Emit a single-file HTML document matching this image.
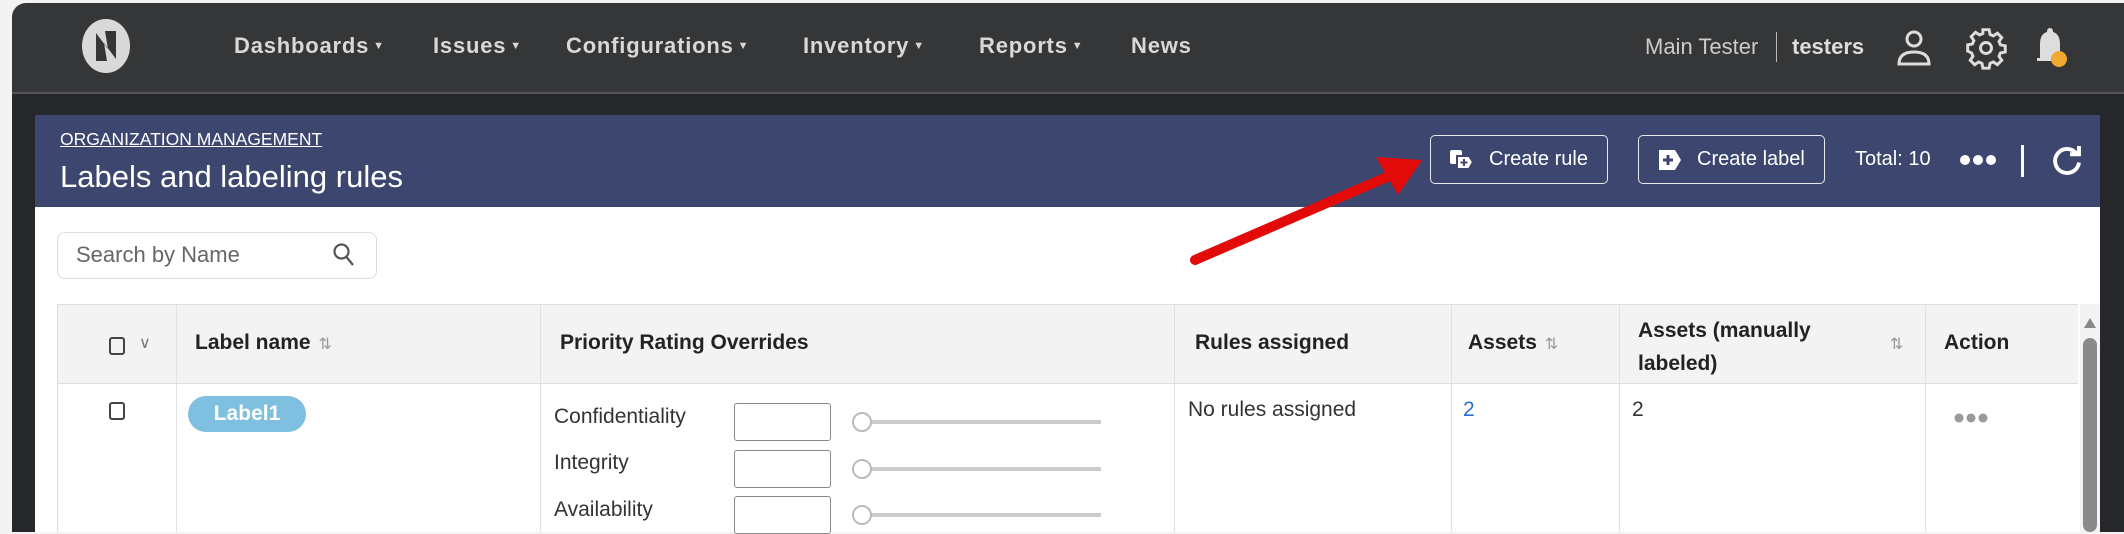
<!DOCTYPE html>
<html><head><meta charset="utf-8"><style>
*{margin:0;padding:0;box-sizing:border-box}
body{width:2124px;height:532px;overflow:hidden;background:#f3f3f3;font-family:"Liberation Sans",sans-serif;position:relative}
.a{position:absolute;white-space:nowrap}
.nav{color:#d8d8d8;font-weight:bold;font-size:22px;top:33px;letter-spacing:0.8px}
.nav small{font-size:11px;margin-left:4px;vertical-align:4px}
.th{font-weight:bold;font-size:21px;color:#222}
.td{font-size:21px;color:#333}
.vl{position:absolute;width:1px;background:#e0e0e0}
.btn{position:absolute;border:1px solid #e8e8ee;border-radius:5px;color:#fff;font-size:20px;display:flex;align-items:center}
.inp{position:absolute;left:734px;width:97px;height:38px;border:1px solid #888;border-radius:3px;background:#fff}
.sl{position:absolute;left:852px;width:249px;height:4px;background:#ccc}
.knob{position:absolute;left:852px;width:20px;height:20px;border:2px solid #bbb;border-radius:50%;background:#fff}
.sort{color:#999;font-size:16px;font-weight:normal;margin-left:8px}
</style></head><body>
<div class="a" style="left:12px;top:3px;width:2112px;height:90px;background:#353637;border-top-left-radius:14px"></div>
<div class="a" style="left:12px;top:92px;width:2112px;height:2px;background:#555"></div>
<div class="a" style="left:12px;top:94px;width:2112px;height:438px;background:#26272b"></div>
<svg class="a" style="left:79px;top:19px" width="54" height="54" viewBox="0 0 54 54"><ellipse cx="27" cy="27" rx="24" ry="27" fill="#d9d9d9"/><path d="M17 42 V14 L29 30 L26 12 H37 V40 L25 24 L28 42 Z" fill="#353637"/></svg>
<div class="a nav" style="left:234px">Dashboards<small>▼</small></div>
<div class="a nav" style="left:433px">Issues<small>▼</small></div>
<div class="a nav" style="left:566px">Configurations<small>▼</small></div>
<div class="a nav" style="left:803px">Inventory<small>▼</small></div>
<div class="a nav" style="left:979px">Reports<small>▼</small></div>
<div class="a nav" style="left:1131px">News</div>
<div class="a" style="left:1645px;top:34px;font-size:22px;color:#ccc">Main Tester</div>
<div class="a" style="left:1776px;top:32px;width:1px;height:30px;background:#bbb"></div>
<div class="a" style="left:1792px;top:34px;font-size:22px;color:#ddd;font-weight:bold">testers</div>
<svg class="a" style="left:1894px;top:28px" width="40" height="40" viewBox="0 0 40 40" fill="none" stroke="#ddd" stroke-width="3"><circle cx="20" cy="11" r="7"/><path d="M5 36 Q5 24 20 24 Q35 24 35 36 Z"/></svg>
<svg class="a" style="left:1964px;top:26px" width="44" height="44" viewBox="0 0 24 24" fill="none" stroke="#ddd" stroke-width="1.6"><circle cx="12" cy="12" r="3"/><path d="M10.3 2h3.4l.5 2.6 1.8.8 2.2-1.5 2.4 2.4-1.5 2.2.8 1.8 2.6.5v3.4l-2.6.5-.8 1.8 1.5 2.2-2.4 2.4-2.2-1.5-1.8.8-.5 2.6h-3.4l-.5-2.6-1.8-.8-2.2 1.5-2.4-2.4 1.5-2.2-.8-1.8L2 13.7v-3.4l2.6-.5.8-1.8-1.5-2.2 2.4-2.4 2.2 1.5 1.8-.8z"/></svg>
<svg class="a" style="left:2032px;top:26px" width="40" height="44" viewBox="0 0 40 44"><path d="M8 32 V18 Q8 8 15 6 Q15 2 18 2 Q21 2 21 6 Q28 8 28 18 V32 H31 V35 H5 V32 Z" fill="#ddd"/><circle cx="27" cy="33" r="8" fill="#f0a830"/></svg>
<div class="a" style="left:35px;top:115px;width:2065px;height:92px;background:#3c466e"></div>
<div class="a" style="left:60px;top:129px;font-size:17.5px;color:#fff;text-decoration:underline">ORGANIZATION MANAGEMENT</div>
<div class="a" style="left:60px;top:159px;font-size:31px;color:#fff">Labels and labeling rules</div>
<div class="btn" style="left:1430px;top:135px;width:178px;height:49px"><svg style="margin:0 14px 0 18px" width="26" height="22" viewBox="0 0 26 22"><rect x="1" y="1" width="12" height="14" rx="2" fill="#fff"/><path d="M8 7 H20 L24 13 L20 20 H8 Z" fill="#fff" stroke="#3c466e" stroke-width="2"/><path d="M15 10 V17 M11.5 13.5 H18.5" stroke="#3c466e" stroke-width="2"/></svg>Create rule</div>
<div class="btn" style="left:1638px;top:135px;width:187px;height:49px"><svg style="margin:0 14px 0 18px" width="26" height="24" viewBox="0 0 26 24"><path d="M2 2 H18 L24 12 L18 22 H2 Z" fill="#fff"/><path d="M11 7 V17 M6 12 H16" stroke="#3c466e" stroke-width="3"/></svg>Create label</div>
<div class="a" style="left:1855px;top:148px;font-size:20px;color:#fff">Total: 10</div>
<svg class="a" style="left:1958px;top:152px" width="40" height="16"><circle cx="7" cy="8" r="5" fill="#fff"/><circle cx="20" cy="8" r="5" fill="#fff"/><circle cx="33" cy="8" r="5" fill="#fff"/></svg>
<div class="a" style="left:2021px;top:145px;width:3px;height:32px;background:#fff"></div>
<svg class="a" style="left:2049px;top:143px" width="36" height="36" viewBox="0 0 24 24" fill="none" stroke="#fff" stroke-width="2.6"><path d="M19 8 A8 8 0 1 0 20 13"/><path d="M14 7.5 H20 V2" stroke-width="2.6"/></svg>
<div class="a" style="left:35px;top:207px;width:2065px;height:325px;background:#fff"></div>
<div class="a" style="left:57px;top:232px;width:320px;height:47px;border:1px solid #ddd;border-radius:8px"></div>
<div class="a" style="left:76px;top:242px;font-size:22px;color:#666">Search by Name</div>
<svg class="a" style="left:332px;top:242px" width="24" height="26" viewBox="0 0 24 26" fill="none" stroke="#555" stroke-width="2.2"><circle cx="9.5" cy="9.5" r="7"/><path d="M14.5 15 L21 23"/></svg>
<svg class="a" style="left:1180px;top:145px" width="260" height="130" viewBox="0 0 260 130"><path d="M15 115 L230 22" stroke="#e30a0a" stroke-width="10" stroke-linecap="round"/><path d="M242 15 L196 12 L218 50 Z" fill="#e30a0a"/></svg>
<div class="a" style="left:57px;top:304px;width:2021px;height:80px;background:#f3f3f3;border-top:1px solid #ddd;border-bottom:1px solid #ddd"></div>
<div class="a" style="left:57px;top:304px;width:1px;height:228px;background:#ddd"></div>
<div class="vl" style="left:176px;top:304px;height:228px"></div>
<div class="vl" style="left:540px;top:304px;height:228px"></div>
<div class="vl" style="left:1174px;top:304px;height:228px"></div>
<div class="vl" style="left:1451px;top:304px;height:228px"></div>
<div class="vl" style="left:1619px;top:304px;height:228px"></div>
<div class="vl" style="left:1925px;top:304px;height:228px"></div>
<div class="a" style="left:109px;top:337px;width:16px;height:18px;border:2px solid #444;border-radius:3px"></div>
<div class="a" style="left:139px;top:333px;font-size:16px;color:#777">∨</div>
<div class="a th" style="left:195px;top:331px">Label name<span class="sort">⇅</span></div>
<div class="a th" style="left:560px;top:331px">Priority Rating Overrides</div>
<div class="a th" style="left:1195px;top:331px">Rules assigned</div>
<div class="a th" style="left:1468px;top:331px">Assets<span class="sort">⇅</span></div>
<div class="a th" style="left:1638px;top:314px;line-height:33px">Assets (manually<br>labeled)</div>
<div class="a th" style="left:1882px;top:331px"><span class="sort">⇅</span></div>
<div class="a th" style="left:1944px;top:331px">Action</div>
<div class="a" style="left:109px;top:402px;width:16px;height:18px;border:2px solid #444;border-radius:3px"></div>
<div class="a" style="left:188px;top:396px;width:118px;height:36px;border-radius:18px;background:#7fbfdf;color:#fff;font-weight:bold;font-size:21px;text-align:center;line-height:36px">Label1</div>
<div class="a td" style="left:554px;top:405px">Confidentiality</div>
<div class="a td" style="left:554px;top:451px">Integrity</div>
<div class="a td" style="left:554px;top:498px">Availability</div>
<div class="inp" style="top:403px"></div><div class="inp" style="top:450px"></div><div class="inp" style="top:496px"></div>
<div class="sl" style="top:420px"></div><div class="sl" style="top:467px"></div><div class="sl" style="top:513px"></div>
<div class="knob" style="top:412px"></div><div class="knob" style="top:459px"></div><div class="knob" style="top:505px"></div>
<div class="a td" style="left:1188px;top:398px">No rules assigned</div>
<div class="a td" style="left:1463px;top:398px;color:#2a6ed0">2</div>
<div class="a td" style="left:1632px;top:398px">2</div>
<svg class="a" style="left:1953px;top:411px" width="36" height="14"><circle cx="6" cy="7" r="4.5" fill="#999"/><circle cx="18" cy="7" r="4.5" fill="#999"/><circle cx="30" cy="7" r="4.5" fill="#999"/></svg>
<div class="a" style="left:2080px;top:304px;width:20px;height:228px;background:#f3f3f3"></div>
<div class="a" style="left:2084px;top:318px;width:0;height:0;border-left:6px solid transparent;border-right:6px solid transparent;border-bottom:10px solid #888"></div>
<div class="a" style="left:2083px;top:338px;width:14px;height:194px;background:#8a8a8a;border-radius:7px"></div>
</body></html>
